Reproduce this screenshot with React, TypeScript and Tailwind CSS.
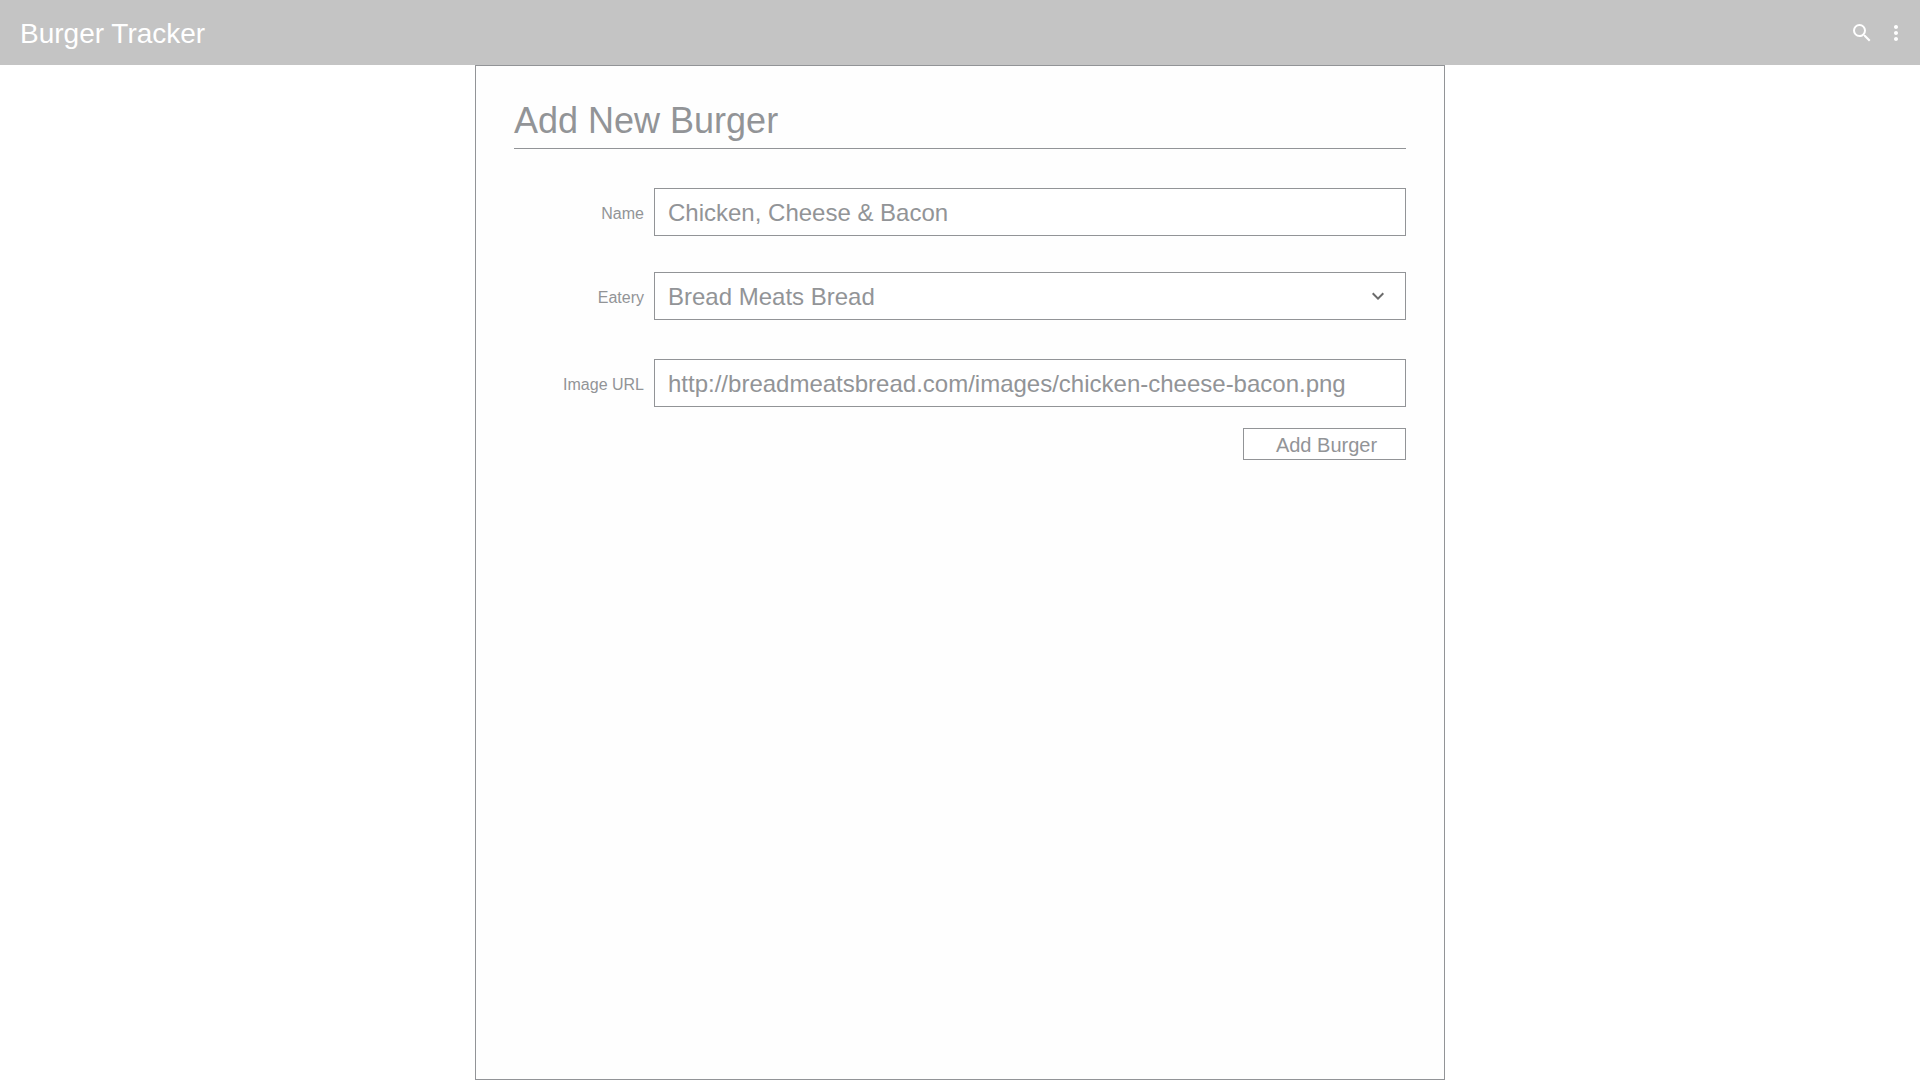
import type { ReactNode } from "react";
import { MdKeyboardArrowDown, MdMoreVert, MdSearch } from "react-icons/md";

const controlClass =
  "block h-12 w-full appearance-none rounded-none border border-[#929497] bg-white px-[13px] pt-0.5 text-2xl text-[#929497] outline-none";

function Field({ id, label, children }: { id: string; label: string; children: ReactNode }) {
  return (
    <div className="flex items-center">
      <label htmlFor={id} className="w-[140px] shrink-0 pt-1 pr-[10px] text-right text-base text-[#929497]">
        {label}
      </label>
      <div className="relative min-w-0 flex-1">{children}</div>
    </div>
  );
}

export default function App() {
  return (
    <div className="flex min-h-screen flex-col bg-white font-['Liberation_Sans',Arial,sans-serif]">
      <header className="flex h-[65px] shrink-0 items-center justify-between bg-[#c4c4c4] pr-3 pl-5 text-white">
        <span className="pt-0.5 text-[28px] leading-8">Burger Tracker</span>
        <div className="flex gap-[10px]">
          <button type="button" aria-label="Search">
            <MdSearch size={24} />
          </button>
          <button type="button" aria-label="More options">
            <MdMoreVert size={24} />
          </button>
        </div>
      </header>

      <main className="mx-auto w-full max-w-[970px] flex-1 border border-[#929497] bg-[#fefefe] px-[38px] pt-[34px]">
        <h1 className="border-b border-[#929497] pb-1.5 text-4xl leading-[42px] text-[#929497]">Add New Burger</h1>

        <form className="flex flex-col pt-[39px]">
          <div className="flex flex-col">
            <Field id="name" label="Name">
              <input id="name" type="text" defaultValue="Chicken, Cheese & Bacon" className={controlClass} />
            </Field>
            <div className="mt-9 mb-[39px]">
              <Field id="eatery" label="Eatery">
                <select id="eatery" defaultValue="Bread Meats Bread" className={controlClass}>
                  <option>Bread Meats Bread</option>
                </select>
                <MdKeyboardArrowDown
                  size={24}
                  className="pointer-events-none absolute top-3 right-4 text-[#6b6b6b]"
                />
              </Field>
            </div>
            <Field id="image-url" label="Image URL">
              <input
                id="image-url"
                type="text"
                defaultValue="http://breadmeatsbread.com/images/chicken-cheese-bacon.png"
                className={controlClass}
              />
            </Field>
          </div>
          <button
            type="button"
            className="mt-[21px] h-8 w-[163px] self-end border border-[#929497] bg-white pt-0.5 pl-1 text-xl text-[#929497]"
          >
            Add Burger
          </button>
        </form>
      </main>
    </div>
  );
}
